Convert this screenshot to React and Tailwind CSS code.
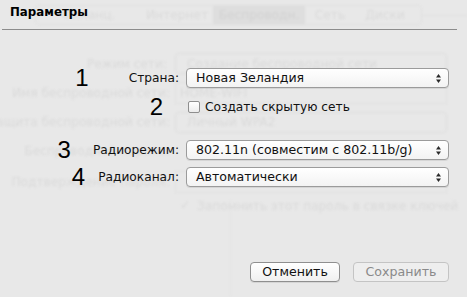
import React from 'react'

const font = { fontFamily: '"DejaVu Sans", "Liberation Sans", sans-serif' }
const numFont = { fontFamily: '"Liberation Sans", Arial, sans-serif' }

function Arrows() {
    return (
        <svg width="7" height="11" viewBox="0 0 7 11" className="shrink-0">
            <path d="M3.5 1 L6 4.5 L1 4.5 Z" fill="#2a2a2a" />
            <path d="M3.5 10 L6 6.5 L1 6.5 Z" fill="#2a2a2a" />
        </svg>
    )
}

function Popup({ children }) {
    return (
        <div className="w-[263px] h-[20px] flex items-center justify-between pl-[9px] pr-[6px] rounded-[4px] border border-[#9b9b9b] bg-gradient-to-b from-white to-[#f3f3f3] shadow-[0_1px_0_rgba(0,0,0,0.08)] text-[12.6px] text-[#111]">
            <span className="leading-none">{children}</span>
            <Arrows />
        </div>
    )
}

function Row({ num, numGap, label, children, className = '' }) {
    return (
        <div className={`flex items-center h-[20px] ${className}`}>
            <div className="w-[186px] h-full flex items-center justify-end pr-[7px]">
                {num && <span className="text-[24px] leading-none text-black" style={{ ...numFont, marginRight: numGap }}>{num}</span>}
                {label && <span className="text-[12.2px] text-[#111]">{label}</span>}
            </div>
            {children}
        </div>
    )
}

// blurred content of the window behind the sheet
function Ghost() {
    const t = 'absolute text-[12.2px] text-[#dadada] whitespace-nowrap leading-none'
    return (
        <div className="absolute inset-0 blur-[0.8px] pointer-events-none">
            <div className="absolute left-[35px] top-[5px] w-[387px] h-[20px] rounded-[4px] border border-[#e0e0e0] flex items-center text-[12.2px] text-[#dadada]">
                <span className="w-[105px] text-center">Финанц.</span>
                <span className="w-[72px] text-center">Интернет</span>
                <span className="w-[92px] h-full bg-[#dedede] text-[#d2d2d2] flex items-center justify-center">Беспроводн.</span>
                <span className="w-[50px] text-center">Сеть</span>
                <span className="w-[60px] text-center">Диски</span>
            </div>
            <div className="absolute left-[422px] top-[15px] w-[45px] border-t border-[#e0e0e0]" />

            <span className={`${t} right-[300px] top-[58px]`}>Режим сети:</span>
            <div className="absolute left-[175px] top-[53px] w-[272px] h-[21px] rounded-[4px] border border-[#dedede]" />
            <span className={`${t} left-[187px] top-[58px]`}>Создание беспроводной сети</span>

            <span className={`${t} right-[297px] top-[87px]`}>Имя беспроводной сети:</span>
            <div className="absolute left-[175px] top-[82px] w-[272px] h-[22px] border border-[#e0e0e0]" />
            <span className={`${t} left-[180px] top-[87px]`}>HOME-WIFI</span>

            <span className={`${t} right-[297px] top-[116px]`}>Защита беспроводной сети:</span>
            <div className="absolute left-[175px] top-[112px] w-[272px] h-[21px] rounded-[4px] border border-[#dedede]" />
            <span className={`${t} left-[187px] top-[116px]`}>Личный WPA2</span>

            <span className={`${t} right-[297px] top-[145px]`}>Беспроводной пароль:</span>
            <span className={`${t} right-[297px] top-[176px]`}>Подтверждение пароля:</span>
            <div className="absolute left-[175px] top-[171px] w-[272px] h-[22px] border border-[#e0e0e0]" />

            <span className={`${t} left-[180px] top-[199px] text-[#d6d6d6]`}>✓</span>
            <span className={`${t} left-[197px] top-[200px] text-[11.6px]`}>Запомнить этот пароль в связке ключей</span>
            <div className="absolute left-[230px] top-[200px] bottom-0 border-l border-[#e3e3e3]" />
        </div>
    )
}

export default function App() {
    return (
        <div className="relative w-[467px] h-[297px] overflow-hidden bg-[#e8e8e8]" style={font}>
            <Ghost />
            <div className="relative flex flex-col">
                <div className="h-[29px] pl-[10px] pt-[7px] text-[11.8px] font-bold text-black leading-none">Параметры</div>
                <div className="ml-[2px] w-[455px] border-t border-[#8c8c8c]" />

                <Row num="1" numGap={40} label="Страна:" className="mt-[38px]">
                    <Popup>Новая Зеландия</Popup>
                </Row>

                <Row num="2" numGap={16} className="mt-[9px]">
                    <div className="flex items-center gap-[5px] ml-[2px]">
                        <div className="w-[12px] h-[12px] rounded-[2px] border border-[#8e8e8e] bg-gradient-to-b from-white to-[#ececec]" />
                        <span className="text-[12.2px] text-[#111]">Создать скрытую сеть</span>
                    </div>
                </Row>

                <Row num="3" numGap={22} label="Радиорежим:" className="mt-[23px]">
                    <Popup>802.11n (совместим с 802.11b/g)</Popup>
                </Row>

                <Row num="4" numGap={13} label="Радиоканал:" className="mt-[7px]">
                    <Popup>Автоматически</Popup>
                </Row>

                <div className="mt-[75px] flex justify-end gap-[13px] pr-[18px]">
                    <button className="w-[90px] h-[20px] rounded-[4px] border border-[#8f8f8f] bg-gradient-to-b from-white to-[#f0f0f0] text-[12.6px] text-[#111] leading-none shadow-[0_1px_0_rgba(0,0,0,0.08)]">Отменить</button>
                    <button className="w-[96px] h-[20px] rounded-[4px] border border-[#c4c4c4] bg-[#eeeeee] text-[12.6px] text-[#8a8a8a] leading-none">Сохранить</button>
                </div>
            </div>
        </div>
    )
}
